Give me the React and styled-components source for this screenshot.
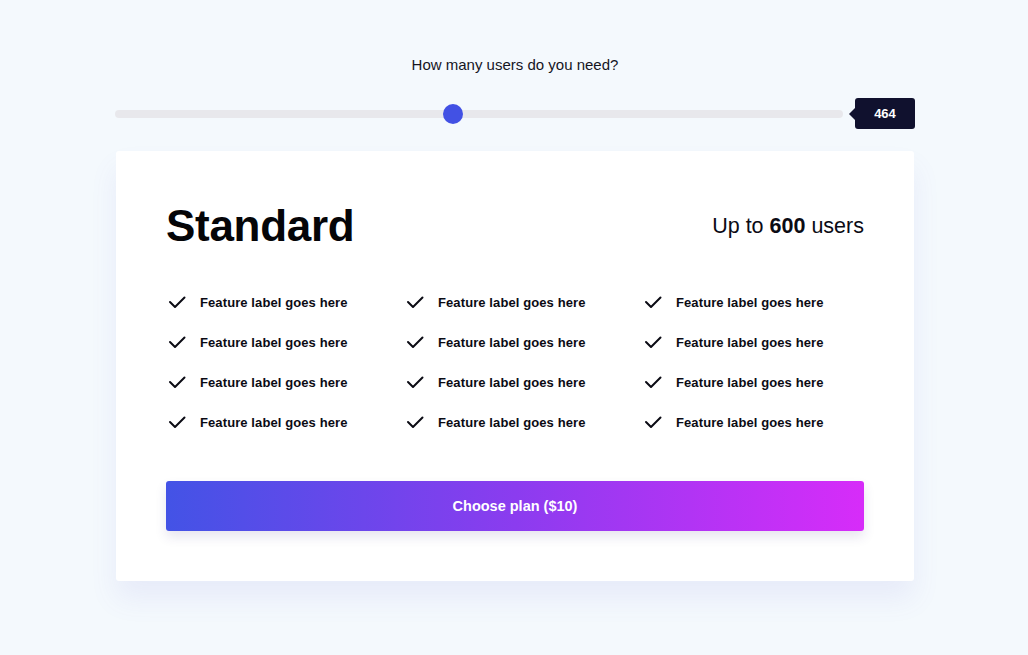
import React from 'react'
import styled, { createGlobalStyle } from 'styled-components'

const GlobalStyle = createGlobalStyle`
  body {
    margin: 0;
    background: #f4f9fd;
    font-family: "Liberation Sans", Arial, sans-serif;
    color: #0b0b14;
  }
`

const Page = styled.div`
  width: 800px;
  margin: 0 auto;
  padding: 55px 0 60px 2px;
`

const Question = styled.div`
  text-align: center;
  font-size: 15px;
  line-height: 20px;
  color: #15151f;
`

const SliderRow = styled.div`
  display: flex;
  align-items: center;
  gap: 12px;
  height: 31px;
  margin-top: 23px;
`

const Track = styled.div`
  position: relative;
  flex: 1;
  height: 8px;
  border-radius: 4px;
  background: #e8e8ec;
`

const Thumb = styled.div`
  position: absolute;
  top: 50%;
  width: 20px;
  height: 20px;
  border-radius: 50%;
  background: #4251e4;
  transform: translate(-50%, -50%);
`

const Bubble = styled.div`
  position: relative;
  width: 60px;
  height: 31px;
  border-radius: 3px;
  background: #10112e;
  color: #fff;
  font-size: 13px;
  font-weight: 700;
  display: flex;
  align-items: center;
  justify-content: center;

  &::before {
    content: '';
    position: absolute;
    left: -6px;
    top: 50%;
    transform: translateY(-50%);
    border-top: 6px solid transparent;
    border-bottom: 6px solid transparent;
    border-right: 6px solid #10112e;
  }
`

const Card = styled.div`
  margin: 22px 1px 0;
  background: #fff;
  border-radius: 3px;
  padding: 49px 50px 50px;
  box-shadow: 0 18px 28px rgba(110, 100, 210, 0.09);
`

const Header = styled.div`
  display: flex;
  align-items: center;
  justify-content: space-between;
  height: 52px;
`

const Title = styled.h1`
  margin: 0;
  font-size: 44px;
  font-weight: 700;
  letter-spacing: -0.3px;
  color: #050508;
`

const Users = styled.div`
  font-size: 21.5px;
  color: #0b0b14;

  b {
    font-weight: 700;
  }
`

const Features = styled.div`
  display: grid;
  grid-template-columns: repeat(3, 238px);
  grid-auto-rows: 40px;
  margin-top: 30px;
`

const Feature = styled.div`
  display: flex;
  align-items: center;
  gap: 14px;
  font-size: 13px;
  font-weight: 700;
  letter-spacing: 0.1px;
  color: #0b0b14;
`

const Check = styled.svg`
  width: 20px;
  height: 20px;
  fill: none;
  stroke: #0b0b14;
  stroke-width: 2px;
  stroke-linecap: round;
  stroke-linejoin: round;
`

const Button = styled.button`
  display: block;
  width: 100%;
  height: 50px;
  margin-top: 39px;
  border: 0;
  border-radius: 3px;
  background: linear-gradient(90deg, #4353e6 0%, #8b3cef 50%, #d72cf9 100%);
  color: #fff;
  font-family: "Liberation Sans", Arial, sans-serif;
  font-size: 14.5px;
  font-weight: 700;
  cursor: pointer;
  box-shadow: 0 6px 12px rgba(60, 40, 120, 0.12);
`

const value = 464
const max = 1000

export default function App() {
  const features = Array.from({ length: 12 })
  return (
    <>
      <GlobalStyle />
      <Page>
        <Question>How many users do you need?</Question>
        <SliderRow>
          <Track>
            <Thumb style={{ left: `${(value / max) * 100}%` }} />
          </Track>
          <Bubble>{value}</Bubble>
        </SliderRow>
        <Card>
          <Header>
            <Title>Standard</Title>
            <Users>
              Up to <b>600</b> users
            </Users>
          </Header>
          <Features>
            {features.map((_, i) => (
              <Feature key={i}>
                <Check viewBox="0 0 20 20">
                  <polyline points="4 10 9 15 18.5 5.5" />
                </Check>
                Feature label goes here
              </Feature>
            ))}
          </Features>
          <Button>Choose plan ($10)</Button>
        </Card>
      </Page>
    </>
  )
}
